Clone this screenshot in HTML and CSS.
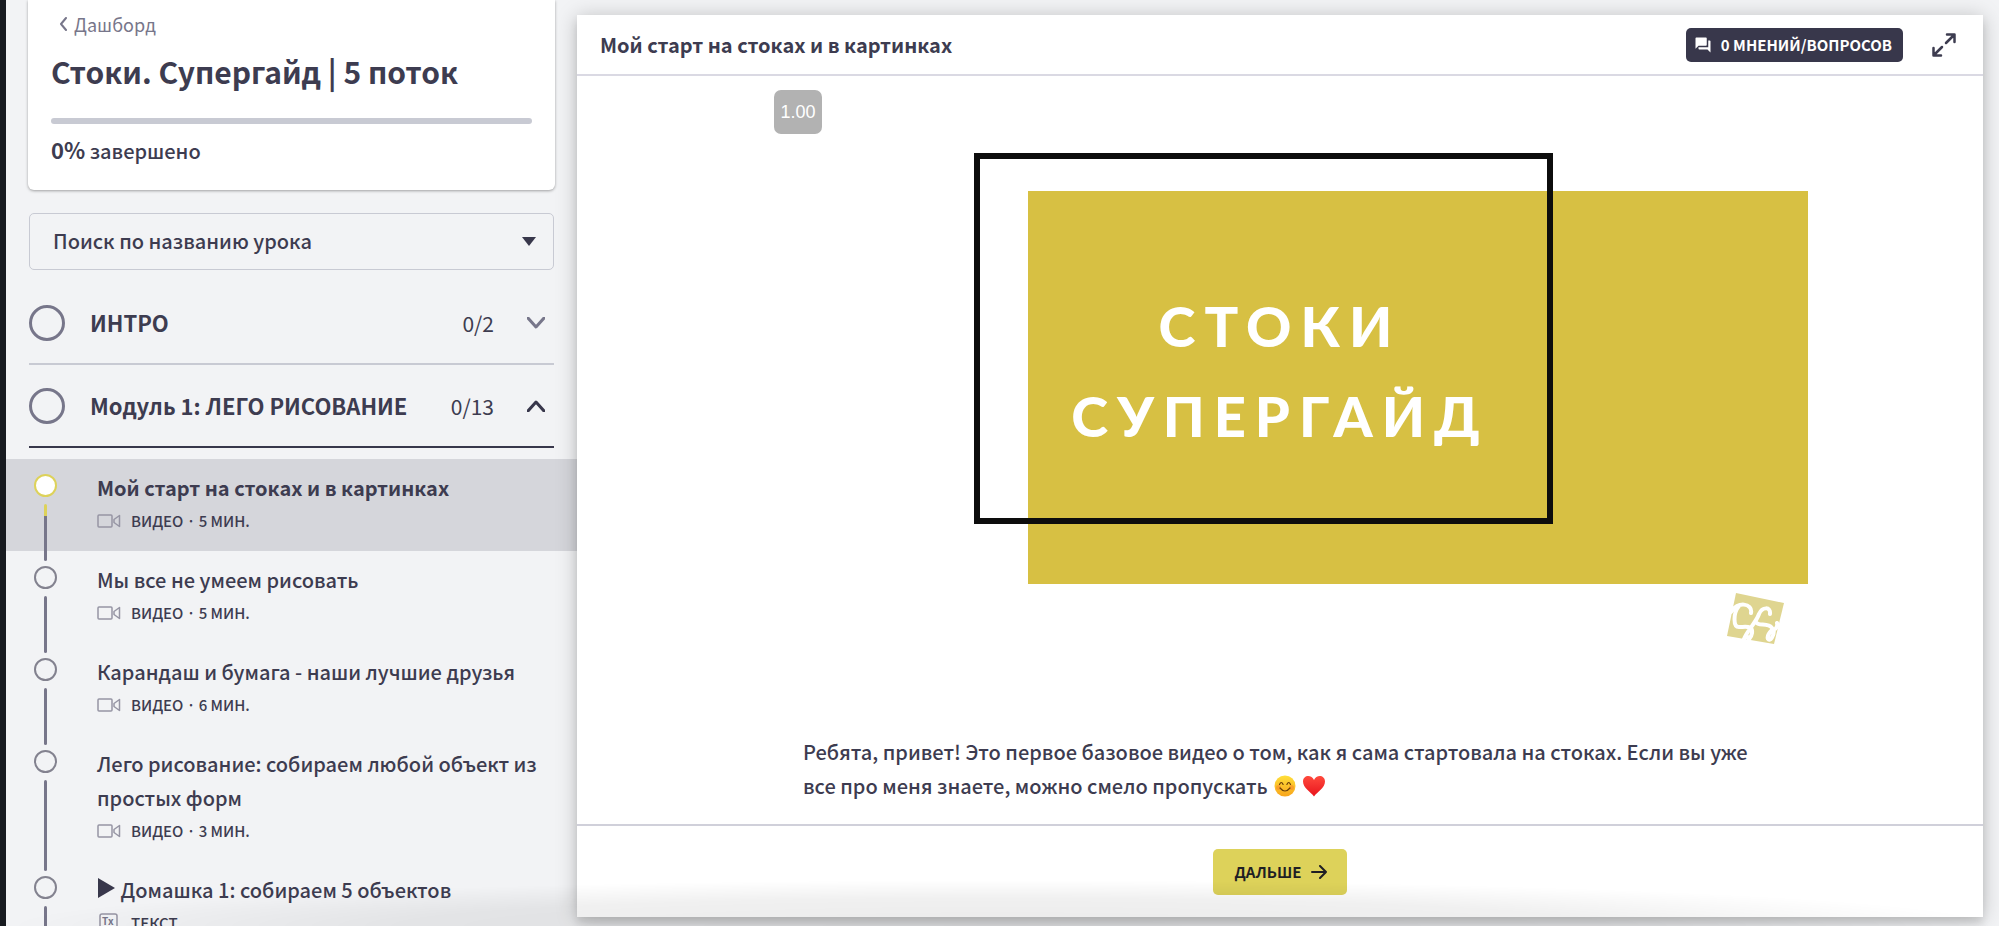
FILE: index.html
```html
<!doctype html>
<html lang="ru">
<head>
    <meta charset="UTF-8">
    <title>Стоки. Супергайд | 5 поток</title>
    <meta name="viewport" content="width=device-width, initial-scale=1">
    <link rel="stylesheet" href="styles.css">
</head>
<body>

    <svg class="defs" aria-hidden="true">
        <symbol id="video" viewBox="0 0 24 14">
            <rect x="1" y="1" width="14" height="12" rx="1"/>
            <path d="M17 5.500 22.500 1.500V12.500L17 8.500Z"/>
        </symbol>
    </svg>

    <aside class="sidebar">

        <div class="course">
            <a class="back" href="#">
                <svg width="9" height="14" viewBox="0 0 9 14"><path d="M7 1 2 7l5 6"/></svg>
                Дашборд
            </a>
            <h1>Стоки. Супергайд | 5 поток</h1>
            <progress value="0" max="100" aria-label="Прогресс"></progress>
            <p class="done"><b>0%</b> завершено</p>
        </div>

        <div class="search">
            <select aria-label="Поиск по названию урока">
                <option>Поиск по названию урока</option>
            </select>
            <svg class="caret" width="14" height="9" viewBox="0 0 14 9"><path d="M0 0h14L7 9z"/></svg>
        </div>

        <button class="module" type="button">
            <span class="ring"></span>
            <span class="name">ИНТРО</span>
            <span class="count">0/2</span>
            <svg width="18" height="12" viewBox="0 0 18 12"><path d="M1 1l8 9 8-9"/></svg>
        </button>

        <button class="module open" type="button">
            <span class="ring"></span>
            <span class="name">Модуль 1: ЛЕГО РИСОВАНИЕ</span>
            <span class="count">0/13</span>
            <svg width="18" height="12" viewBox="0 0 18 12"><path d="M1 11l8-9 8 9"/></svg>
        </button>

        <nav class="lessons">
            <a class="lesson active" href="#">
                <span class="track"><i class="dot"></i><i class="line"></i></span>
                <span class="info">
                    <span class="title">Мой старт на стоках и в картинках</span>
                    <span class="meta"><svg width="24" height="14"><use href="#video"/></svg>ВИДЕО · 5 МИН.</span>
                </span>
            </a>
            <a class="lesson" href="#">
                <span class="track"><i class="dot"></i><i class="line"></i></span>
                <span class="info">
                    <span class="title">Мы все не умеем рисовать</span>
                    <span class="meta"><svg width="24" height="14"><use href="#video"/></svg>ВИДЕО · 5 МИН.</span>
                </span>
            </a>
            <a class="lesson" href="#">
                <span class="track"><i class="dot"></i><i class="line"></i></span>
                <span class="info">
                    <span class="title">Карандаш и бумага - наши лучшие друзья</span>
                    <span class="meta"><svg width="24" height="14"><use href="#video"/></svg>ВИДЕО · 6 МИН.</span>
                </span>
            </a>
            <a class="lesson" href="#">
                <span class="track"><i class="dot"></i><i class="line"></i></span>
                <span class="info">
                    <span class="title">Лего рисование: собираем любой объект из простых форм</span>
                    <span class="meta"><svg width="24" height="14"><use href="#video"/></svg>ВИДЕО · 3 МИН.</span>
                </span>
            </a>
            <a class="lesson" href="#">
                <span class="track"><i class="dot"></i><i class="line"></i></span>
                <span class="info">
                    <span class="title"><svg class="play" width="19" height="20" viewBox="0 0 19 20"><path d="M1 0v20l17-10z"/></svg> Домашка 1: собираем 5 объектов</span>
                    <span class="meta"><svg class="doc" width="24" height="20" viewBox="0 0 24 20"><rect x="3" y="1" width="17" height="24" rx="2"/><path d="M6 15.500h11"/><text x="5" y="12">Tx</text></svg>ТЕКСТ</span>
                </span>
            </a>
        </nav>
    </aside>

    <main class="player">

        <header class="bar">
            <h2>Мой старт на стоках и в картинках</h2>
            <button class="comments" type="button">
                <svg width="18" height="18" viewBox="0 0 24 24"><path d="M21 6h-2v9H6v2c0 .55.45 1 1 1h11l4 4V7c0-.55-.45-1-1-1zm-4 6V3c0-.55-.45-1-1-1H3c-.55 0-1 .45-1 1v14l4-4h10c.55 0 1-.45 1-1z"/></svg>
                0 МНЕНИЙ/ВОПРОСОВ
            </button>
            <button class="expand" type="button" aria-label="На весь экран">
                <svg width="24" height="24" viewBox="0 0 24 24"><path d="M15 1.500h7.500V9M22 2l-8 8M1.500 15v7.500H9M2 22l8-8"/></svg>
            </button>
        </header>

        <div class="content">
            <div class="video">
                <span class="speed">1.00</span>
                <svg class="frame" viewBox="0 0 1060 596">
                    <rect x="278" y="115" width="780" height="393" fill="#d7c043"/>
                    <rect x="227" y="80" width="573" height="365" fill="none" stroke="#0d0d0d" stroke-width="6"/>
                    <text x="530" y="271">СТОКИ</text>
                    <text x="530" y="361">СУПЕРГАЙД</text>
                    <g class="logo">
                        <path d="M986 517l48 10-10 41-47-8z" fill="#dfd590"/>
                        <path d="M981 536C987 525 1003 527 1001 537M989 530C983 537 983 551 989 551 996 551 1003 549 1002 557 1001 562 998 565 998 561M1020 538C1021 530 1012 531 1009 538 1006 547 998 553 994 563M1006 546C1008 551 1018 546 1022 552 1025 556 1028 550 1027 547M1024 554C1024 560 1020 566 1018 563 1017 561 1019 557 1022 554"/>
                    </g>
                </svg>
            </div>
            <p class="text">Ребята, привет! Это первое базовое видео о том, как я сама стартовала на стоках. Если вы уже все про меня знаете, можно смело пропускать
                <svg class="emoji" role="img" aria-label="улыбка" viewBox="0 0 22 22">
                    <defs>
                        <linearGradient id="sun" x2="0" y2="1"><stop offset="0" stop-color="#ffdf3a"/><stop offset="1" stop-color="#f8a51b"/></linearGradient>
                        <linearGradient id="red" x2="0" y2="1"><stop offset="0" stop-color="#ff4a3d"/><stop offset="1" stop-color="#e8131c"/></linearGradient>
                    </defs>
                    <circle cx="11" cy="11" r="10.500" fill="url(#sun)"/>
                    <circle cx="4.500" cy="12.500" r="2.500" fill="#f98a2b" opacity=".6"/>
                    <circle cx="17.500" cy="12.500" r="2.500" fill="#f98a2b" opacity=".6"/>
                    <path d="M5.500 9.500q1.800-4 3.600 0M12.900 9.500q1.800-4 3.600 0M6 13q5 6 10 0" fill="none" stroke="#6b3f0a" stroke-width="1.200" stroke-linecap="round"/>
                </svg>
                <svg class="emoji" role="img" aria-label="сердце" viewBox="0 0 22 22"><path d="M11 21.500C8 17 0 13 0 6.500 0 0 8.500-1 11 5 13.500-1 22 0 22 6.500 22 13 14 17 11 21.500z" fill="url(#red)"/></svg>
            </p>
        </div>

        <footer class="next">
            <button type="button">
                ДАЛЬШЕ
                <svg width="16" height="14" viewBox="0 0 16 14"><path d="M1 7h14M9 1l6 6-6 6"/></svg>
            </button>
        </footer>
    </main>

</body>
</html>
```
FILE: styles.css
```css
* {
    box-sizing: border-box;
}

body {
    display: flex;
    height: 100vh;
    margin: 0;
    overflow: hidden;
    border-left: 6px solid #171a1f;
    background-color: #f2f3f5;
    color: #3d3c50;
    font-family: "Noto Sans CJK KR", "Noto Sans", sans-serif;
    font-size: 20px;
    font-weight: 500;
    line-height: 34px;
}

/* shade along the bottom of the window */
body::after {
    content: "";
    position: fixed;
    left: 6px;
    right: 0;
    bottom: 0;
    height: 46px;
    background: radial-gradient(ellipse 50% 100% at 50% 100%, rgba(0,0,0,0.08), rgba(0,0,0,0.06) 60%, transparent);
    pointer-events: none;
}

h1, h2, p {
    margin: 0;
}

a {
    color: inherit;
    text-decoration: none;
}

button, select {
    font: inherit;
    color: inherit;
    background: none;
    border: 0;
    padding: 0;
}

svg {
    flex: none;
    fill: none;
    stroke: currentColor;
    stroke-width: 2;
    stroke-linecap: round;
    stroke-linejoin: round;
}

.defs {
    position: absolute;
    width: 0;
    height: 0;
}

.sidebar {
    flex: 0 0 571px;
    height: 100%;
    overflow: hidden;
}

.course {
    margin: 0 22px;
    height: 190px;
    padding: 7px 23px 0;
    background-color: #fff;
    border-radius: 0 0 6px 6px;
    box-shadow: 0 1px 3px rgba(0,0,0,0.35);
}

.back {
    display: flex;
    align-items: center;
    gap: 6px;
    padding-left: 8px;
    color: #77768a;
    font-size: 18px;
    font-weight: normal;
}

h1 {
    margin-top: 8px;
    font-size: 30px;
    line-height: 44px;
}

progress {
    display: block;
    appearance: none;
    width: 100%;
    height: 6px;
    margin-top: 25px;
    border-radius: 3px;
    background-color: #c8cad3;
}

progress::-webkit-progress-bar {
    background: none;
}

.done {
    margin-top: 8px;
}

.done b {
    font-size: 22px;
}

.search {
    position: relative;
    margin: 23px 23px 0;
}

.search select {
    appearance: none;
    display: block;
    width: 100%;
    height: 57px;
    padding: 0 23px 2px;
    border: 1px solid #c8cad3;
    border-radius: 5px;
}

.caret {
    position: absolute;
    right: 18px;
    top: 24px;
}

.caret path, .play path {
    fill: #38374b;
    stroke: none;
}

.module {
    display: flex;
    align-items: center;
    width: calc(100% - 46px);
    height: 83px;
    margin: 0 23px;
    padding-right: 9px;
    border-bottom: 2px solid #c8cad3;
    text-align: left;
}

.search + .module {
    margin-top: 12px;
}

.module.open {
    border-color: #38374b;
}

.ring {
    width: 36px;
    height: 36px;
    border: 3px solid #77768a;
    border-radius: 50%;
}

.name {
    flex: 1;
    margin-left: 25px;
    padding-bottom: 2px;
    font-size: 22px;
    font-weight: bold;
}

.count {
    margin-right: 33px;
    font-size: 21px;
    font-weight: normal;
}

.module svg {
    color: #77768a;
    stroke-width: 3;
}

.module.open svg {
    color: #38374b;
}

.lessons {
    padding-top: 11px;
}

.lesson {
    display: flex;
    padding: 0 23px 0 28px;
}

.active {
    background-color: #d5d6db;
}

.track {
    display: flex;
    flex-direction: column;
    align-items: center;
    width: 23px;
    margin: 15px 40px -10px 0;
}

.dot {
    flex: none;
    width: 23px;
    height: 23px;
    border: 2px solid #83828f;
    border-radius: 50%;
}

.line {
    flex: 1;
    width: 3px;
    margin: 7px 0 0;
    border-radius: 2px;
    background-color: #77768a;
}

.active .dot {
    border-color: #ddd25a;
    background-color: #fff;
}

.active .line {
    background: linear-gradient(#ddd25a 12px, #77768a 12px);
}

.info {
    flex: 1;
    padding: 12px 0 14px;
}

.title {
    display: block;
}

.active .title {
    font-weight: bold;
}

.meta {
    display: flex;
    align-items: center;
    gap: 10px;
    line-height: 32px;
    font-size: 15px;
}

.meta svg {
    color: #9695a4;
    stroke-width: 1.5;
}

.doc text {
    font-size: 10px;
    font-weight: bold;
    fill: #77768a;
    stroke: none;
}

.player {
    display: flex;
    flex-direction: column;
    flex: 1;
    margin: 15px 16px 9px 0;
    background-color: #fff;
    box-shadow: 0 2px 20px rgba(0,0,0,0.22), 0 6px 8px rgba(0,0,0,0.1);
}

.bar {
    display: flex;
    align-items: center;
    height: 61px;
    padding: 0 27px 0 23px;
    border-bottom: 2px solid #dad9e3;
}

h2 {
    flex: 1;
    font-size: 20px;
}

.comments {
    display: flex;
    align-items: center;
    gap: 9px;
    height: 34px;
    padding: 0 11px 0 8px;
    border-radius: 5px;
    background-color: #38374b;
    color: #fff;
    font-size: 15px;
    font-weight: bold;
}

.comments path {
    fill: #fff;
    stroke: none;
}

.expand {
    display: flex;
    margin-left: 29px;
}

.expand svg {
    stroke-width: 2.5;
}

.content {
    flex: 1;
    overflow: hidden;
}

.video {
    position: relative;
    max-width: 1060px;
    margin: 0 auto;
}

.frame {
    display: block;
    width: 100%;
    stroke: none;
}

.frame rect {
    stroke-linejoin: miter;
}

.frame text {
    fill: #fff;
    font-family: Lato, sans-serif;
    font-size: 56px;
    font-weight: 900;
    letter-spacing: 9px;
    text-anchor: middle;
}

.logo path + path {
    stroke: #fff;
    stroke-width: 4;
}

.speed {
    position: absolute;
    left: 24px;
    top: 14px;
    width: 48px;
    border-radius: 7px;
    background-color: #b2b2b2;
    color: #fff;
    font: 18px/44px "Liberation Sans", sans-serif;
    text-align: center;
}

.text {
    max-width: 954px;
    margin: 63px auto 0;
}

.emoji {
    width: 22px;
    height: 22px;
    margin-left: 2px;
    vertical-align: -3px;
    stroke: none;
}

.next {
    display: flex;
    justify-content: center;
    height: 93px;
    padding-top: 23px;
    border-top: 2px solid #d0d0da;
}

.next button {
    display: flex;
    align-items: center;
    gap: 10px;
    height: 46px;
    padding: 0 20px 0 22px;
    border-radius: 5px;
    background-color: #ddd25a;
    color: #1f1f24;
    font-size: 15px;
    font-weight: bold;
}
```
